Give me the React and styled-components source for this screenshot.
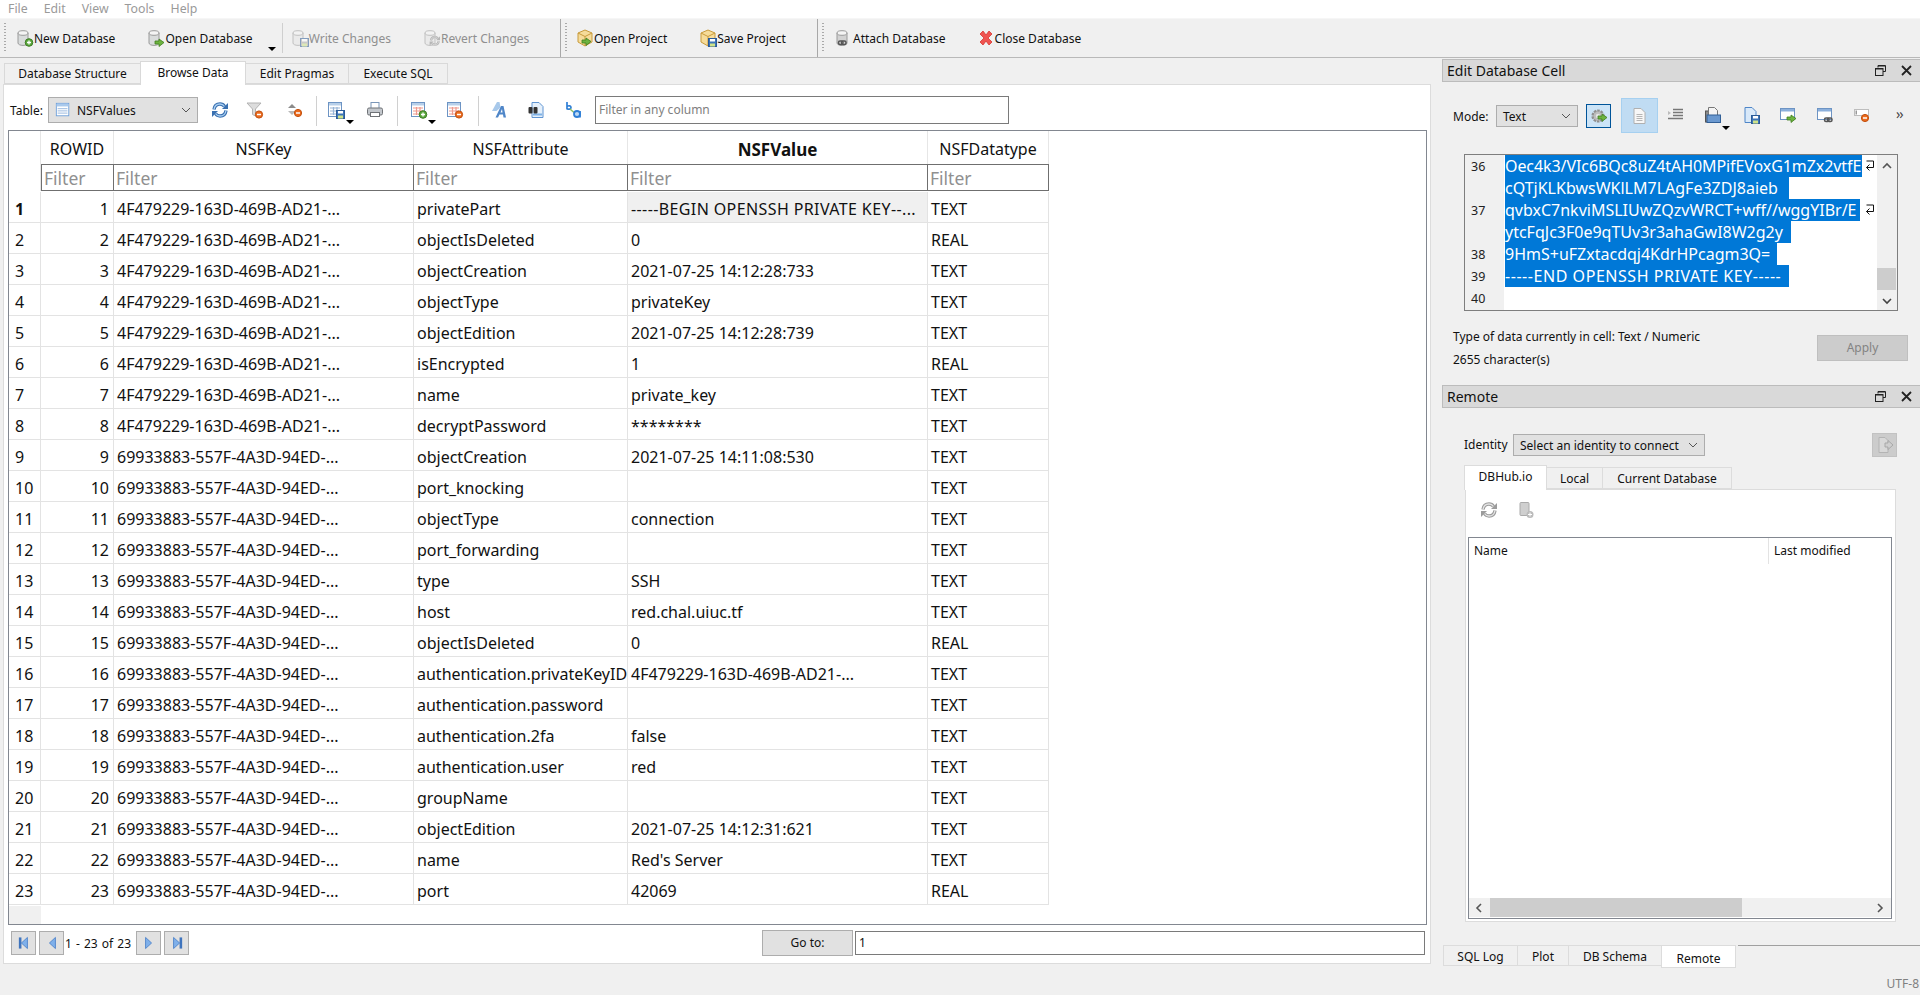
import React from "react";
import styled, { createGlobalStyle } from "styled-components";

const FONT = `"Noto Sans", "Open Sans", Tahoma, sans-serif`;

const Global = createGlobalStyle`
  html, body { margin: 0; padding: 0; background: #f0f0f0; overflow: hidden; }
  * { box-sizing: border-box; }
  #root { width: 1920px; height: 995px; }
`;

const Page = styled.div`
  width: 1920px; height: 995px; display: flex; flex-direction: column;
  background: #f0f0f0; font-family: ${FONT}; font-size: 12px; color: #111; overflow: hidden;
`;
const MenuBar = styled.div`
  height: 18px; background: #fff; display: flex; align-items: center; padding-left: 8px; gap: 16px;
  color: #9a9a9a; font-size: 12.3px; flex: none;
`;
const MenuItem = styled.span`line-height: 18px;`;

const ToolBar = styled.div`
  height: 40px; flex: none; display: flex; align-items: stretch; border-top: 1px solid #f6f6f6;
  border-bottom: 1px solid #b9b9b9; background: #f0f0f0;
`;
const ToolSection = styled.div`
  display: flex; align-items: center; width: ${p => p.$w}px; flex: none; position: relative;
  padding-left: ${p => p.$pad}px; gap: 32px;
  border-right: ${p => (p.$edge ? "1px solid #a8a8a8" : "none")};
`;
const Grip = styled.i`
  position: absolute; left: 4px; top: 4px; bottom: 4px; width: 2px;
  background: repeating-linear-gradient(to bottom, #a9a9a9 0 1px, transparent 1px 3px);
`;
const ToolBtn = styled.span`
  display: inline-flex; align-items: center; white-space: nowrap; font-size: 12px; margin-left: ${p => p.$ml || 0}px;
  color: ${p => (p.$off ? "#8f8f8f" : "#111")};
`;
const MiniSep = styled.i`
  position: absolute; left: ${p => p.$x}px; top: 4px; bottom: 4px; width: 1px; background: #cfcfcf;
`;
const DropMark = styled.i`
  position: absolute; left: ${p => p.$x}px; top: ${p => p.$y}px; width: 0; height: 0;
  border-left: 4px solid transparent; border-right: 4px solid transparent; border-top: 4px solid #000;
`;

const Workspace = styled.div`flex: 1; display: flex; min-height: 0;`;
const LeftCol = styled.div`width: 1442px; flex: none; display: flex; flex-direction: column; padding-left: 3px;`;
const MainTabs = styled.div`height: 26px; display: flex; align-items: flex-end; padding-left: 2px; flex: none;`;
const MainTab = styled.div`
  width: ${p => p.$w}px; text-align: center; font-size: 12px;
  height: ${p => (p.$on ? 24 : 21)}px; line-height: ${p => (p.$on ? 22 : 20)}px;
  margin-bottom: ${p => (p.$on ? -1 : 0)}px; position: relative; z-index: ${p => (p.$on ? 2 : 1)};
  background: ${p => (p.$on ? "#fff" : "#f0f0f0")};
  border: 1px solid #d9d9d9; border-bottom: ${p => (p.$on ? "none" : "1px solid #d9d9d9")};
  margin-left: -1px;
`;
const Pane = styled.div`
  width: 1428px; height: 880px; background: #fff; border: 1px solid #dcdcdc; display: flex; flex-direction: column;
  padding: 11px 3px 0 4px; flex: none;
`;
const FilterBar = styled.div`height: 28px; display: flex; align-items: center; position: relative; flex: none;`;
const TableLabel = styled.span`font-size: 12px; margin-left: 2px; width: 38px;`;
const Combo = styled.div`
  width: ${p => p.$w}px; height: ${p => p.$h || 26}px; flex: none; background: #e1e1e1; border: 1px solid #adadad;
  display: flex; align-items: center; gap: 6px; padding: 0 6px; font-size: 12px; justify-content: space-between;
`;
const ComboLabel = styled.span`display: flex; align-items: center; gap: 6px; white-space: nowrap;`;
const IconAt = styled.span`
  position: absolute; left: ${p => p.$x}px; top: ${p => p.$y ?? 5}px; display: inline-flex;
`;
const Sep = styled.i`position: absolute; left: ${p => p.$x}px; top: 0; width: 1px; height: 30px; background: #d0d0d0;`;
const AnyFilter = styled.div`
  position: absolute; left: 587px; top: 0; width: 414px; height: 28px; border: 1px solid #7a7a7a;
  font-size: 12px; color: #808080; padding: 0 3px; line-height: 26px;
`;

const TableBox = styled.div`
  margin-top: 6px; width: 1419px; height: 795px; border: 1px solid #828790; flex: none; background: #fff; position: relative;
  display: grid; grid-template-columns: 32px 73px 300px 214px 300px 121px; grid-auto-rows: 31px;
  grid-template-rows: 33px 27px 1px repeat(23, 31px); align-content: start; overflow: hidden;
`;
const HeadCell = styled.div`
  font-size: ${p => (p.$bold ? 17 : 16)}px; font-weight: ${p => (p.$bold ? 700 : 400)}; text-align: center; line-height: 37px; border-right: 1px solid #e6e6e6;
  white-space: nowrap; overflow: hidden;
`;
const Corner = styled.div`border-right: 1px solid #e6e6e6;`;
const FilterCell = styled.div`
  border: 1px solid #6f6f6f; margin-left: -1px; font-size: 17.5px; color: #909090; line-height: 26px; padding-left: 2px; overflow: hidden;
  ${p => (p.$first ? "margin-left:0;" : "")}
`;
const Spacer = styled.div`grid-column: 1 / -1;`;
const RowHead = styled.div`
  font-size: 16px; font-weight: ${p => (p.$bold ? 700 : 400)}; padding: 4px 0 0 6px; line-height: 27px; height: 31px;
  border-right: 1px solid #e3e3e3; border-bottom: 1px solid #e3e3e3;
`;
const Cell = styled.div`
  font-size: 16px; line-height: 27px; padding: 4px ${p => (p.$right ? 4 : 2)}px 0 3px; text-align: ${p => (p.$right ? "right" : "left")};
  border-right: 1px solid #e3e3e3; border-bottom: 1px solid #e3e3e3; white-space: nowrap; overflow: hidden; height: 31px;
  letter-spacing: ${p => p.$ls || 0}px;
  background: ${p => (p.$sel ? "#f0f0f0" : "#fff")};
`;
const BottomStub = styled.div`
  position: absolute; left: 0; bottom: 0; width: 32px; height: 18px; background: #f0f0f0;
`;

const Pager = styled.div`
  height: 26px; margin-top: 5px; display: flex; align-items: center; position: relative; flex: none; padding-left: 3px;
`;
const PageBtn = styled.div`
  width: 25px; height: 24px; background: #e1e1e1; border: 1px solid #adadad; display: flex; align-items: center; justify-content: center;
  margin-right: ${p => p.$mr ?? 3}px; flex: none;
`;
const PageText = styled.span`font-size: 12px; white-space: nowrap; width: 71px; margin-left: -1px; word-spacing: 1px;`;
const GoBtn = styled.div`
  margin-left: 570px; width: 91px; height: 26px; background: #e1e1e1; border: 1px solid #adadad; text-align: center; line-height: 24px; font-size: 12px; flex: none;
`;
const GoInput = styled.div`
  margin-left: 2px; width: 570px; height: 24px; border: 1px solid #7a7a7a; font-size: 12px; line-height: 22px; padding-left: 3px; flex: none; background: #fff;
`;

const Dock = styled.div`width: 478px; flex: none; display: flex; flex-direction: column; padding-top: 1px;`;
const DockTitle = styled.div`
  height: 23px; flex: none; background: #d9d9d9; border: 1px solid #bcbcbc; border-right: none; display: flex; align-items: center; justify-content: space-between;
  padding: 0 8px 0 4px; font-size: 14px; 
`;
const DockBtns = styled.div`display: flex; gap: 15px; align-items: center;`;
const ModeRow = styled.div`height: 35px; margin-top: 16px; position: relative; flex: none;`;
const ModeLabel = styled.span`position: absolute; left: 11px; top: 10px; font-size: 12px;`;
const ModeCombo = styled(Combo)`position: absolute; left: 54px; top: 7px; background: #e1e1e1;`;
const GearBtn = styled.div`
  position: absolute; left: 144px; top: 6px; width: 25px; height: 24px; background: #cce4f7; border: 1px solid #005499;
  display: flex; align-items: center; justify-content: center;
`;
const ActiveBtn = styled.div`
  position: absolute; left: 179px; top: 0; width: 37px; height: 35px; background: #c0dcf3; border: 1px solid #a6d0f0;
  display: flex; align-items: center; justify-content: center;
`;
const Chevrons = styled.span`position: absolute; left: 454px; top: 6px; font-size: 14px; color: #444; letter-spacing: -1px;`;

const Editor = styled.div`
  margin: 21px 0 0 22px; width: 434px; height: 157px; border: 1px solid #7e7e7e; background: #fff; display: flex; overflow: hidden; flex: none;
`;
const Gutter = styled.div`width: 39px; flex: none; background: #f0f0f0; padding-left: 6px;`;
const GutterNum = styled.div`height: 22px; font-size: 12.5px; line-height: 23px; color: #222;`;
const EditorBody = styled.div`flex: 1; padding-left: 1px; min-width: 0; position: relative;`;
const Line = styled.div`height: 22px; position: relative;`;
const Sel = styled.span`
  display: block; width: ${p => p.$w}px; height: 22px; background: #0078d7; color: #fff; font-size: 16px; line-height: 23px; white-space: nowrap; overflow: hidden;
  letter-spacing: ${p => p.$ls || 0}px;
`;
const WrapMark = styled.span`position: absolute; right: 2px; top: 5px; display: inline-flex;`;
const VScroll = styled.div`width: 20px; flex: none; background: #f0f0f0; position: relative;`;
const VThumb = styled.i`position: absolute; left: 0; top: 113px; width: 19px; height: 22px; background: #cdcdcd;`;
const ArrowSlot = styled.span`
  position: absolute; left: ${p => (p.$l != null ? p.$l + "px" : "auto")}; right: ${p => (p.$r != null ? p.$r + "px" : "auto")};
  top: ${p => (p.$t != null ? p.$t + "px" : "auto")}; bottom: ${p => (p.$b != null ? p.$b + "px" : "auto")}; display: inline-flex;
`;
const InfoBlock = styled.div`height: 74px; position: relative; flex: none;`;
const InfoText = styled.div`position: absolute; left: 11px; top: ${p => p.$t}px; font-size: 12px; line-height: 18px; white-space: nowrap;`;
const ApplyBtn = styled.div`
  position: absolute; left: 375px; top: 24px; width: 91px; height: 26px; background: #cccccc; border: 1px solid #bfbfbf; text-align: center; line-height: 24px; color: #838383; font-size: 12px;
`;
const IdentityRow = styled.div`height: 24px; margin-top: 25px; position: relative; flex: none;`;
const IdentityLabel = styled.span`position: absolute; left: 22px; top: 3px; font-size: 12px;`;
const IdentityCombo = styled(Combo)`position: absolute; left: 71px; top: 1px; height: 22px;`;
const GhostBtn = styled.div`
  position: absolute; left: 430px; top: 0; width: 25px; height: 24px; background: #cccccc; border: 1px solid #c2c2c2; display: flex; align-items: center; justify-content: center;
`;
const SubTabs = styled.div`height: 24px; margin: 8px 0 0 22px; display: flex; align-items: flex-end; flex: none;`;
const SubTab = styled.div`
  width: ${p => p.$w}px; height: ${p => (p.$on ? 25 : 22)}px; margin-bottom: ${p => (p.$on ? -1 : 0)}px; text-align: center; font-size: 12px;
  line-height: ${p => (p.$on ? 22 : 21)}px; background: ${p => (p.$on ? "#fff" : "#f0f0f0")}; border: 1px solid #dcdcdc; margin-left: ${p => (p.$on ? 0 : -1)}px;
  border-bottom: ${p => (p.$on ? "none" : "1px solid #dcdcdc")}; position: relative; z-index: ${p => (p.$on ? 2 : 1)};
`;
const SubPane = styled.div`
  margin-left: 23px; width: 431px; height: 433px; background: #fff; border: 1px solid #dcdcdc; position: relative; padding: 47px 3px 2px 2px; flex: none;
`;
const ListBox = styled.div`width: 424px; height: 382px; border: 1px solid #828790; position: relative; background: #fff;`;
const ListHead = styled.div`display: flex; height: 26px; font-size: 12px; line-height: 26px;`;
const ListCol = styled.div`
  width: ${p => p.$w}px; padding-left: 5px; border-right: ${p => (p.$div ? "1px solid #e3e3e3" : "none")};
`;
const HScroll = styled.div`position: absolute; left: 0; right: 0; bottom: 1px; height: 19px; background: #f0f0f0;`;
const HThumb = styled.i`position: absolute; left: 21px; top: 0; width: 252px; height: 19px; background: #cdcdcd;`;
const BottomBar = styled.div`
  height: 23px; margin-top: 23px; flex: none; position: relative; display: flex; align-items: flex-start; padding-left: 2px;
`;
const BottomLine = styled.i`position: absolute; left: 296px; right: 0; top: 0; height: 1px; background: #a0a0a0;`;
const BottomTab = styled.div`
  width: ${p => p.$w}px; height: ${p => (p.$on ? 23 : 21)}px; font-size: 12px; text-align: center; line-height: ${p => (p.$on ? 25 : 21)}px; flex: none;
  background: ${p => (p.$on ? "#fff" : "#f0f0f0")}; border: 1px solid #dcdcdc; margin-left: -1px; position: relative;
`;
const Status = styled.div`position: absolute; right: 1px; top: 30px; color: #808080; font-size: 12px; white-space: nowrap;`;

/* ---------- icon drawings ---------- */
const Svg = ({ s = 18, children, o }) => (
  <svg width={s} height={s} viewBox="0 0 18 18" style={o ? { opacity: o } : undefined}>{children}</svg>
);
const Cyl = ({ c = "#d9dcdc" }) => (
  <g>
    <path d="M2 4v10c0 1.4 2.3 2.4 5 2.4s5-1 5-2.4V4z" fill={c} stroke="#9a9a9a" />
    <ellipse cx="7" cy="4" rx="5" ry="2.3" fill="#f4f4f4" stroke="#9a9a9a" />
  </g>
);
const Plus = ({ x = 13, y = 13.5 }) => (
  <g>
    <circle cx={x} cy={y} r="3.8" fill="#5aa63c" stroke="#3d7d25" />
    <path d={`M${x - 2} ${y}h4M${x} ${y - 2}v4`} stroke="#fff" strokeWidth="1.3" />
  </g>
);
const Minus = ({ x = 13, y = 13.5 }) => (
  <g>
    <circle cx={x} cy={y} r="3.6" fill="#ec6a1c" stroke="#c04f0e" />
    <path d={`M${x - 2} ${y}h4`} stroke="#fff" strokeWidth="1.5" />
  </g>
);
const GArrow = ({ x = 8, y = 10 }) => (
  <path transform={`translate(${x} ${y})`} d="M0 2h4V0l5 3.5L4 7.5V5H0z" fill="#6db33f" stroke="#3f7d20" strokeWidth=".8" />
);
const Floppy = ({ x = 9, y = 9, c = "#3d74b8" }) => (
  <g transform={`translate(${x} ${y})`}>
    <rect x=".5" y=".5" width="8" height="8" fill={c} stroke="#2b5a96" />
    <rect x="2" y="1" width="5" height="2.5" fill="#fff" />
    <rect x="2" y="5.5" width="5" height="3" fill="#cfe38a" />
  </g>
);
const Box = () => (
  <g>
    <path d="M9 1l7 3v9l-7 4-7-4V4z" fill="#f6dc9a" stroke="#c89b3c" />
    <path d="M2 4l7 3.5L16 4M9 7.5V17" fill="none" stroke="#c89b3c" />
  </g>
);
const TableIco = ({ red }) => (
  <g>
    <rect x="1.5" y="1.5" width="13" height="14" fill="#fff" stroke="#6d94c4" />
    <rect x="2" y="2" width="12" height="2.5" fill="#b7cfe9" />
    <path d="M3 7h10M3 10h10M3 13h10M6.5 6v8M10 6v8" stroke={red ? "#ef9a8e" : "#97b4d6"} strokeWidth="1.2" fill="none" />
  </g>
);
const Doc = ({ fill = "#fff", stroke = "#7a9ccb" }) => (
  <path d="M3 1.5h7l4 4v11H3z" fill={fill} stroke={stroke} />
);
const Win = () => (
  <g>
    <rect x="1.5" y="2.5" width="14" height="11" fill="#fff" stroke="#6d94c4" />
    <rect x="2" y="3" width="13" height="2.5" fill="#8cb0dc" />
  </g>
);
const Chain = ({ x = 9, y = 11 }) => (
  <g transform={`translate(${x} ${y})`} fill="none" stroke="#555" strokeWidth="1.5">
    <rect x=".5" y="1" width="4.5" height="3.6" rx="1.5" />
    <rect x="3.5" y="1" width="4.5" height="3.6" rx="1.5" />
  </g>
);
const Arrows = ({ c = "#3a70b0", c2 = "#a9cff2" }) => (
  <g fill="none">
    <path d="M3 8.500C3.500 5 6 3 9 3c2.200 0 3.600 1 4.500 2.500" stroke={c} strokeWidth="3.400" />
    <path d="M15 9.500C14.500 13 12 15 9 15c-2.200 0-3.600-1-4.500-2.500" stroke={c} strokeWidth="3.400" />
    <path d="M3 8.500C3.500 5 6 3 9 3c2.200 0 3.600 1 4.500 2.500" stroke={c2} strokeWidth="1.300" />
    <path d="M15 9.500C14.500 13 12 15 9 15c-2.200 0-3.600-1-4.500-2.500" stroke={c2} strokeWidth="1.300" />
    <path d="M11 8h6V2z" fill={c} />
    <path d="M7 10H1v6z" fill={c} />
  </g>
);

const Icons = {
  newDb: <Svg><Cyl /><Plus /></Svg>,
  openDb: <Svg><Cyl /><GArrow /></Svg>,
  write: <Svg o=".55"><Cyl c="#e6e6e6" /><Floppy c="#aaa" /></Svg>,
  revert: <Svg o=".55"><Cyl c="#e6e6e6" /><g transform="translate(6 6) scale(.65)"><Arrows c="#888" c2="#ccc" /></g></Svg>,
  openProj: <Svg><Box /><GArrow x="6" y="9" /></Svg>,
  saveProj: <Svg><Box /><Floppy /></Svg>,
  attach: <Svg><Cyl c="#d2d2d2" /><Chain x="3" y="11" /></Svg>,
  close: (
    <Svg><path d="M3 5l3-3 3 4 3-4 3 3-4 4 4 4-3 3-3-4-3 4-3-3 4-4z" fill="#ef5350" stroke="#d8362f" strokeWidth=".8" /></Svg>
  ),
  refresh: <Svg><Arrows /></Svg>,
  funnel: (
    <Svg><path d="M1 2h14l-5.500 6v7l-3-1.500V8z" fill="#dcdcdc" stroke="#b2b2b2" /><Minus /></Svg>
  ),
  sort: (
    <Svg><path d="M7 3l4 4H3z" fill="#8b8b8b" /><path d="M3 10h8l-4 4z" fill="#b8b8b8" /><Minus x="13" y="12" /></Svg>
  ),
  saveTbl: <Svg><TableIco /><Floppy /></Svg>,
  print: (
    <Svg>
      <rect x="5" y="1.500" width="8" height="6" fill="#fff" stroke="#7a96b8" />
      <rect x="1.500" y="7" width="15" height="7" rx="1.500" fill="#c3c7cc" stroke="#6f7276" />
      <rect x="4.500" y="11.500" width="9" height="4" fill="#fff" stroke="#6f7276" />
    </Svg>
  ),
  addRow: <Svg><TableIco red /><Plus /></Svg>,
  delRow: <Svg><TableIco red /><Minus /></Svg>,
  font: (
    <Svg>
      <path d="M1 10L6 1h2.500l1 5.500L5.500 10z" fill="#a7c8ea" />
      <path fillRule="evenodd" d="M4.500 16.500L10 5h2.500l2.500 11.500h-2.500l-.5-3H8.500l-1.500 3zM9.500 11.500h2l-.5-3.500z" fill="#4f86c8" />
    </Svg>
  ),
  find: (
    <Svg>
      <path d="M5 1.500h7l4 4v11H5z" fill="#e5f0fb" stroke="#5f94d2" />
      <rect x="6" y="12.500" width="9" height="2" fill="#7fb2e6" />
      <rect x="1.500" y="6" width="4" height="6.500" rx="1" fill="#333" />
      <rect x="6.500" y="6" width="4" height="6.500" rx="1" fill="#333" />
    </Svg>
  ),
  replace: (
    <Svg>
      <path d="M2 1v7.500M2 5.500c2-1.500 4-.5 4 1s-2 2.500-4 1" fill="none" stroke="#2f7fd6" strokeWidth="1.700" />
      <path d="M5 8l4 3.500" stroke="#8cc067" strokeWidth="1.500" />
      <circle cx="12" cy="13" r="3" fill="#bcd9f5" stroke="#2f7fd6" strokeWidth="1.800" />
      <path d="M15 10v6.500" stroke="#2f7fd6" strokeWidth="1.800" />
    </Svg>
  ),
  gear: (
    <Svg>
      <circle cx="8" cy="9" r="5.500" fill="#bdbdbd" stroke="#8f8f8f" strokeDasharray="2.500 1" strokeWidth="2.200" />
      <circle cx="8" cy="9" r="2.200" fill="#e4e4e4" />
      <GArrow x="8" y="7" />
    </Svg>
  ),
  doc: (
    <Svg>
      <Doc fill="#f7f7f7" stroke="#b0b0b0" />
      <path d="M5.500 7.500h6M5.500 9.500h6M5.500 11.500h6M5.500 13.500h6" stroke="#b5b5b5" />
    </Svg>
  ),
  indent: (
    <Svg><path d="M6 3.500h10M6 6.500h10M6 9.500h10M1 12.500h15" stroke="#777" strokeWidth="1.300" /><path d="M1 5l3 2-3 2z" fill="#bbb" /></Svg>
  ),
  openFile: (
    <Svg>
      <rect x="1.500" y="5" width="3" height="11" fill="#8a8a8a" stroke="#555" />
      <path d="M4.500 1.500h6l3 3v6h-9z" fill="#f4f4f4" stroke="#777" />
      <rect x="3" y="9" width="13.500" height="7.500" fill="#6a98cf" stroke="#315f96" />
    </Svg>
  ),
  saveFile: <Svg><Doc fill="#d9e9f9" stroke="#4f86c8" /><Floppy /></Svg>,
  winArrow: <Svg><Win /><GArrow x="8" y="9" /></Svg>,
  winChain: <Svg><Win /><Chain x="8" y="11" /></Svg>,
  winMinus: (
    <Svg><rect x="1.500" y="3.500" width="14" height="6" fill="#fff" stroke="#bdbdbd" /><rect x="2.500" y="4.500" width="1.500" height="4" fill="#999" /><Minus x="12" y="12" /></Svg>
  ),
  ghostFile: (
    <Svg o=".7">
      <path d="M3 1.500h6l3 3v12H3z" fill="#dedede" stroke="#aaa" />
      <path d="M9 7h3V4.500l5 4.500-5 4.500V11H9z" fill="#d0d0d0" stroke="#999" />
    </Svg>
  ),
  ghostRefresh: <Svg><Arrows c="#9c9c9c" c2="#e4e4e4" /></Svg>,
  ghostAdd: (
    <Svg>
      <rect x="3" y="1.500" width="9" height="13" rx="1" fill="#cfcfcf" stroke="#aaa" />
      <circle cx="13" cy="13.500" r="3.500" fill="#bbb" />
      <path d="M11 13.500h4M13 11.500v4" stroke="#fff" />
    </Svg>
  ),
  table: (
    <Svg s={16}>
      <rect x="1.500" y="1.500" width="14" height="14" fill="#fff" stroke="#6d9fda" />
      <rect x="2" y="2" width="13" height="3" fill="#a9c9ec" />
      <path d="M3 7.500h11M3 10h11M3 12.500h11" stroke="#8fb2dc" />
    </Svg>
  ),
};

const Nav = ({ kind }) => {
  const bar = kind === "first" || kind === "last";
  const left = kind === "first" || kind === "prev";
  return (
    <svg width="12" height="14" viewBox="0 0 14 16">
      {left ? (
        <path d="M11 1.500v13L4 8z" fill="#7fb0ea" stroke="#4a80c8" />
      ) : (
        <path d="M3 1.500v13L10 8z" fill="#7fb0ea" stroke="#4a80c8" />
      )}
      {bar && (left ? <rect x="1" y="1.500" width="3" height="13" fill="#3f74bd" /> : <rect x="10" y="1.500" width="3" height="13" fill="#3f74bd" />)}
    </svg>
  );
};
const Chev = ({ dir = "down", c = "#555", s = 10 }) => {
  const d = { down: "M1 3l4 4 4-4", up: "M1 7l4-4 4 4", left: "M7 1L3 5l4 4", right: "M3 1l4 4-4 4" }[dir];
  return (
    <svg width={s} height={s} viewBox="0 0 10 10">
      <path d={d} fill="none" stroke={c} strokeWidth={dir === "down" && c === "#555" ? 1 : 1.600} />
    </svg>
  );
};
const FloatIco = () => (
  <svg width="11" height="11" viewBox="0 0 11 11">
    <path d="M3 2.500V.5h7.500v6H8" fill="none" stroke="#222" />
    <rect x=".5" y="3.500" width="7.500" height="7" fill="none" stroke="#222" />
    <path d="M1 4h7M3 1h7" stroke="#222" />
  </svg>
);
const CloseIco = () => (
  <svg width="11" height="11" viewBox="0 0 11 11">
    <path d="M1 1l9 9M10 1l-9 9" stroke="#222" strokeWidth="1.800" />
  </svg>
);
const Wrap = () => (
  <svg width="10" height="12" viewBox="0 0 10 12">
    <path d="M1.500 1h7v6.500H1.500M4.500 4.500l-3 3 3 3" fill="none" stroke="#111" />
  </svg>
);

/* ---------- data ---------- */
const K1 = "4F479229-163D-469B-AD21-...";
const K2 = "69933883-557F-4A3D-94ED-...";
const rows = [
  [K1, "privatePart", "-----BEGIN OPENSSH PRIVATE KEY--...", "TEXT"],
  [K1, "objectIsDeleted", "0", "REAL"],
  [K1, "objectCreation", "2021-07-25 14:12:28:733", "TEXT"],
  [K1, "objectType", "privateKey", "TEXT"],
  [K1, "objectEdition", "2021-07-25 14:12:28:739", "TEXT"],
  [K1, "isEncrypted", "1", "REAL"],
  [K1, "name", "private_key", "TEXT"],
  [K1, "decryptPassword", "********", "TEXT"],
  [K2, "objectCreation", "2021-07-25 14:11:08:530", "TEXT"],
  [K2, "port_knocking", "", "TEXT"],
  [K2, "objectType", "connection", "TEXT"],
  [K2, "port_forwarding", "", "TEXT"],
  [K2, "type", "SSH", "TEXT"],
  [K2, "host", "red.chal.uiuc.tf", "TEXT"],
  [K2, "objectIsDeleted", "0", "REAL"],
  [K2, "authentication.privateKeyID", K1, "TEXT"],
  [K2, "authentication.password", "", "TEXT"],
  [K2, "authentication.2fa", "false", "TEXT"],
  [K2, "authentication.user", "red", "TEXT"],
  [K2, "groupName", "", "TEXT"],
  [K2, "objectEdition", "2021-07-25 14:12:31:621", "TEXT"],
  [K2, "name", "Red's Server", "TEXT"],
  [K2, "port", "42069", "REAL"],
];
const heads = ["ROWID", "NSFKey", "NSFAttribute", "NSFValue", "NSFDatatype"];
const lines = [
  ["36", "Oec4k3/VIc6BQc8uZ4tAH0MPifEVoxG1mZx2vtfE", 357, true, -0.08],
  ["", "cQTjKLKbwsWKlLM7LAgFe3ZDJ8aieb", 284],
  ["37", "qvbxC7nkviMSLIUwZQzvWRCT+wff//wggYIBr/E", 355, true],
  ["", "ytcFqJc3F0e9qTUv3r3ahaGwI8W2g2y", 286],
  ["38", "9HmS+uFZxtacdqj4KdrHPcagm3Q=", 272],
  ["39", "-----END OPENSSH PRIVATE KEY-----", 284, false, 0.55],
  ["40", "", 0],
];

export default function App() {
  return (
    <Page>
      <Global />
      <MenuBar>
        {["File", "Edit", "View", "Tools", "Help"].map(m => <MenuItem key={m}>{m}</MenuItem>)}
      </MenuBar>
      <ToolBar>
        <ToolSection $w={561} $pad={16} $edge>
          <Grip />
          <ToolBtn>{Icons.newDb}New Database</ToolBtn>
          <ToolBtn>{Icons.openDb}Open Database</ToolBtn>
          <DropMark $x={268} $y={28} />
          <MiniSep $x={282} />
          <ToolBtn $ml={6} $off>{Icons.write}Write Changes</ToolBtn>
          <ToolBtn $off>{Icons.revert}Revert Changes</ToolBtn>
        </ToolSection>
        <ToolSection $w={257} $pad={15} $edge>
          <Grip />
          <ToolBtn>{Icons.openProj}Open Project</ToolBtn>
          <ToolBtn>{Icons.saveProj}Save Project</ToolBtn>
        </ToolSection>
        <ToolSection $w={400} $pad={17}>
          <Grip />
          <ToolBtn>{Icons.attach}Attach Database</ToolBtn>
          <ToolBtn $ml={-1}>{Icons.close}Close Database</ToolBtn>
        </ToolSection>
      </ToolBar>
      <Workspace>
        <LeftCol>
          <MainTabs>
            <MainTab $w={137}>Database Structure</MainTab>
            <MainTab $w={106} $on>Browse Data</MainTab>
            <MainTab $w={104}>Edit Pragmas</MainTab>
            <MainTab $w={100}>Execute SQL</MainTab>
          </MainTabs>
          <Pane>
            <FilterBar>
              <TableLabel>Table:</TableLabel>
              <Combo $w={150}>
                <ComboLabel>{Icons.table}NSFValues</ComboLabel>
                <Chev />
              </Combo>
              <IconAt $x={203}>{Icons.refresh}</IconAt>
              <IconAt $x={238}>{Icons.funnel}</IconAt>
              <IconAt $x={277}>{Icons.sort}</IconAt>
              <Sep $x={308} />
              <IconAt $x={319}>{Icons.saveTbl}</IconAt>
              <DropMark $x={338} $y={24} />
              <IconAt $x={358}>{Icons.print}</IconAt>
              <Sep $x={389} />
              <IconAt $x={402}>{Icons.addRow}</IconAt>
              <DropMark $x={420} $y={24} />
              <IconAt $x={438}>{Icons.delRow}</IconAt>
              <Sep $x={470} />
              <IconAt $x={483}>{Icons.font}</IconAt>
              <IconAt $x={519}>{Icons.find}</IconAt>
              <IconAt $x={557}>{Icons.replace}</IconAt>
              <AnyFilter>Filter in any column</AnyFilter>
            </FilterBar>
            <TableBox>
              <Corner />
              {heads.map(h => <HeadCell key={h} $bold={h === "NSFValue"}>{h}</HeadCell>)}
              <Corner />
              {heads.map((h, i) => <FilterCell key={h} $first={i === 0}>Filter</FilterCell>)}
              <Spacer />
              {rows.map((r, i) => (
                <React.Fragment key={i}>
                  <RowHead $bold={i === 0}>{i + 1}</RowHead>
                  <Cell $right>{i + 1}</Cell>
                  <Cell>{r[0]}</Cell>
                  <Cell>{r[1]}</Cell>
                  <Cell $sel={i === 0} $ls={i === 0 ? 0.39 : 0}>{r[2]}</Cell>
                  <Cell>{r[3]}</Cell>
                </React.Fragment>
              ))}
              <BottomStub />
            </TableBox>
            <Pager>
              <PageBtn><Nav kind="first" /></PageBtn>
              <PageBtn $mr={2}><Nav kind="prev" /></PageBtn>
              <PageText>1 - 23 of 23</PageText>
              <PageBtn><Nav kind="next" /></PageBtn>
              <PageBtn><Nav kind="last" /></PageBtn>
              <GoBtn>Go to:</GoBtn>
              <GoInput>1</GoInput>
            </Pager>
          </Pane>
        </LeftCol>
        <Dock>
          <DockTitle>
            Edit Database Cell
            <DockBtns><FloatIco /><CloseIco /></DockBtns>
          </DockTitle>
          <ModeRow>
            <ModeLabel>Mode:</ModeLabel>
            <ModeCombo $w={82} $h={22}>Text<Chev /></ModeCombo>
            <GearBtn>{Icons.gear}</GearBtn>
            <ActiveBtn>{Icons.doc}</ActiveBtn>
            <IconAt $x={225} $y={8}>{Icons.indent}</IconAt>
            <IconAt $x={262} $y={8}>{Icons.openFile}</IconAt>
            <DropMark $x={280} $y={28} />
            <IconAt $x={300} $y={8}>{Icons.saveFile}</IconAt>
            <IconAt $x={337} $y={8}>{Icons.winArrow}</IconAt>
            <IconAt $x={374} $y={8}>{Icons.winChain}</IconAt>
            <IconAt $x={411} $y={8}>{Icons.winMinus}</IconAt>
            <Chevrons>››</Chevrons>
          </ModeRow>
          <Editor>
            <Gutter>
              {lines.map((l, i) => <GutterNum key={i}>{l[0]}</GutterNum>)}
            </Gutter>
            <EditorBody>
              {lines.map((l, i) => (
                <Line key={i}>
                  {l[2] > 0 && <Sel $w={l[2]} $ls={l[4]}>{l[1]}</Sel>}
                  {l[3] && <WrapMark><Wrap /></WrapMark>}
                </Line>
              ))}
            </EditorBody>
            <VScroll>
              <VThumb />
              <ArrowSlot $l={5} $t={6}><Chev dir="up" c="#555" /></ArrowSlot>
              <ArrowSlot $l={5} $b={4}><Chev dir="down" c="#444" /></ArrowSlot>
            </VScroll>
          </Editor>
          <InfoBlock>
            <InfoText $t={17}>Type of data currently in cell: Text / Numeric</InfoText>
            <InfoText $t={40}>2655 character(s)</InfoText>
            <ApplyBtn>Apply</ApplyBtn>
          </InfoBlock>
          <DockTitle>
            Remote
            <DockBtns><FloatIco /><CloseIco /></DockBtns>
          </DockTitle>
          <IdentityRow>
            <IdentityLabel>Identity</IdentityLabel>
            <IdentityCombo $w={192}>Select an identity to connect<Chev /></IdentityCombo>
            <GhostBtn>{Icons.ghostFile}</GhostBtn>
          </IdentityRow>
          <SubTabs>
            <SubTab $w={83} $on>DBHub.io</SubTab>
            <SubTab $w={57}>Local</SubTab>
            <SubTab $w={130}>Current Database</SubTab>
          </SubTabs>
          <SubPane>
            <IconAt $x={14} $y={11}>{Icons.ghostRefresh}</IconAt>
            <IconAt $x={51} $y={11}>{Icons.ghostAdd}</IconAt>
            <ListBox>
              <ListHead>
                <ListCol $w={300} $div>Name</ListCol>
                <ListCol $w={120}>Last modified</ListCol>
              </ListHead>
              <HScroll>
                <HThumb />
                <ArrowSlot $l={5} $t={5}><Chev dir="left" c="#555" /></ArrowSlot>
                <ArrowSlot $r={6} $t={5}><Chev dir="right" c="#555" /></ArrowSlot>
              </HScroll>
            </ListBox>
          </SubPane>
          <BottomBar>
            <BottomLine />
            <BottomTab $w={75}>SQL Log</BottomTab>
            <BottomTab $w={52}>Plot</BottomTab>
            <BottomTab $w={94}>DB Schema</BottomTab>
            <BottomTab $w={75} $on>Remote</BottomTab>
            <Status>UTF-8</Status>
          </BottomBar>
        </Dock>
      </Workspace>
    </Page>
  );
}
